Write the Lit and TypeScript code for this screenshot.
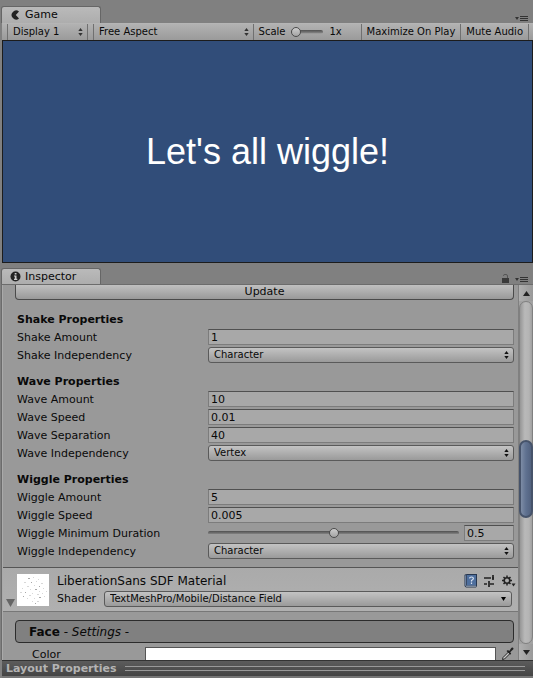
import { LitElement, html, css, svg } from "lit";
import { customElement } from "lit/decorators.js";

type Field = {
  id: string;
  label: string;
  kind: "text" | "select" | "slider";
  value: string;
};

type Section = { title: string; fields: Field[] };

const SECTIONS: Section[] = [
  {
    title: "Shake Properties",
    fields: [
      { id: "shake-amount", label: "Shake Amount", kind: "text", value: "1" },
      { id: "shake-ind", label: "Shake Independency", kind: "select", value: "Character" },
    ],
  },
  {
    title: "Wave Properties",
    fields: [
      { id: "wave-amount", label: "Wave Amount", kind: "text", value: "10" },
      { id: "wave-speed", label: "Wave Speed", kind: "text", value: "0.01" },
      { id: "wave-sep", label: "Wave Separation", kind: "text", value: "40" },
      { id: "wave-ind", label: "Wave Independency", kind: "select", value: "Vertex" },
    ],
  },
  {
    title: "Wiggle Properties",
    fields: [
      { id: "wiggle-amount", label: "Wiggle Amount", kind: "text", value: "5" },
      { id: "wiggle-speed", label: "Wiggle Speed", kind: "text", value: "0.005" },
      { id: "wiggle-min", label: "Wiggle Minimum Duration", kind: "slider", value: "0.5" },
      { id: "wiggle-ind", label: "Wiggle Independency", kind: "select", value: "Character" },
    ],
  },
];

// Faint glyph specks on the font atlas thumbnail.
const SPECKS = [
  [11, 4], [16, 3], [21, 5], [7, 8], [14, 8], [19, 7], [24, 9], [17, 11], [22, 12], [10, 12],
  [5, 14], [13, 15], [18, 15], [26, 14], [22, 17], [3, 18], [8, 18], [15, 19], [20, 20], [25, 19],
  [6, 22], [12, 21], [10, 24], [17, 24], [22, 23], [27, 22], [15, 27], [20, 27], [18, 29], [29, 17],
];

const updown = html`<svg class="updown" viewBox="0 0 5 8" aria-hidden="true">
  <path d="M2.5 0 4.7 3H.3zM2.5 8 4.7 5H.3z" />
</svg>`;

const paneMenu = html`<svg width="13" height="6" viewBox="0 0 13 6" aria-hidden="true">
  <path d="M0 1h4L2 4zM5 0h8v1H5zM5 2h8v1H5zM5 4h8v1H5z" fill="#333" />
</svg>`;

@customElement("app-root")
export class AppRoot extends LitElement {
  static styles = css`
    :host {
      display: flex;
      flex-direction: column;
      height: 100vh;
      overflow: hidden;
      background: #808080;
      color: #090909;
      font: 11px/16px "DejaVu Sans", Verdana, sans-serif;
    }
    * {
      box-sizing: border-box;
    }
    button,
    input,
    select {
      margin: 0;
      padding: 0;
      border: 0;
      border-radius: 0;
      background: none;
      color: inherit;
      font: inherit;
      outline: 0;
    }
    svg {
      display: block;
      flex: none;
    }

    .tabs {
      display: flex;
      align-items: flex-end;
      gap: 5px;
      height: 17px;
      padding: 0 5px 0 1px;
      flex: none;
    }
    .game-tabs {
      margin-top: 6px;
    }
    .inspector-tabs {
      height: 16px;
      margin-top: 5px;
    }
    .tab {
      display: flex;
      align-items: center;
      gap: 4px;
      width: 100px;
      height: 100%;
      padding: 0 8px;
      border: 1px solid #666;
      border-bottom: 0;
      border-radius: 3px 3px 0 0;
      background: linear-gradient(#bababa, #adadad);
      white-space: nowrap;
    }
    .tabs .tools {
      display: flex;
      align-items: flex-end;
      gap: 6px;
      margin-left: auto;
      padding-bottom: 1px;
    }
    .tools button {
      display: block;
    }

    .toolbar {
      display: flex;
      flex: none;
      height: 17px;
      margin: 0 0 0 2px;
      padding-left: 5px;
      border-top: 1px solid #b5b5b5;
      background: linear-gradient(#b2b2b2, #9a9a9a);
      font-size: 10px;
      white-space: nowrap;
    }
    .pick {
      position: relative;
      border-left: 1px solid #707070;
    }
    .pick select {
      appearance: none;
      display: block;
      width: 100%;
      height: 16px;
      padding-left: 5px;
    }
    .display {
      width: 81px;
      border-right: 1px solid #707070;
    }
    .aspect {
      flex: 1;
      margin-left: 5px;
    }
    .updown {
      position: absolute;
      right: 4px;
      top: 4px;
      width: 5px;
      height: 8px;
      fill: #333;
      pointer-events: none;
    }
    .scale {
      display: flex;
      align-items: center;
      width: 108px;
      padding-left: 5px;
      border-left: 1px solid #707070;
    }
    .scale input {
      width: 32px;
      margin: 0 6px;
    }
    .toggle {
      padding: 0 5px;
      border-left: 1px solid #707070;
    }
    .toggle:last-child {
      border-right: 1px solid #707070;
      margin-right: 4px;
    }

    input[type="range"] {
      appearance: none;
      height: 16px;
    }
    input[type="range"]::-webkit-slider-runnable-track {
      height: 4px;
      border-radius: 2px;
      background: linear-gradient(#505050, #777 60%, #aaa);
    }
    input[type="range"]::-webkit-slider-thumb {
      appearance: none;
      width: 10px;
      height: 10px;
      margin-top: -3px;
      border: 1px solid #4c4c4c;
      border-radius: 50%;
      background: linear-gradient(#ccc, #a4a4a4);
    }

    .view {
      flex: none;
      display: flex;
      align-items: center;
      justify-content: center;
      aspect-ratio: 531 / 223;
      margin-left: 2px;
      border: 1px solid #1c1c1c;
      background: #314d79;
      color: #fff;
      font: 36px/40px "Liberation Sans", Arial, sans-serif;
    }

    .inspector {
      flex: 1 1 0;
      min-height: 0;
      display: flex;
      margin-left: 1px;
      border-left: 1px solid #6c6c6c;
      border-top: 1px solid #6c6c6c;
      overflow: hidden;
      background: #999;
    }
    .content {
      flex: 1;
      min-width: 0;
      border-left: 1px solid #aaa;
    }
    .form {
      padding: 0 4px 6px 12px;
    }
    .update {
      display: block;
      width: 100%;
      height: 15px;
      margin-bottom: 3px;
      border: 1px solid #4a4a4a;
      border-top: 0;
      border-radius: 0 0 4px 4px;
      background: linear-gradient(#c0c0c0, #999);
      line-height: 14px;
    }
    fieldset {
      margin: 0;
      padding: 8px 0 0 2px;
      border: 0;
      min-width: 0;
    }
    legend {
      padding: 0;
      float: left;
      width: 100%;
      height: 18px;
      font-weight: bold;
      line-height: 18px;
    }
    .row {
      clear: both;
      display: grid;
      grid-template-columns: 191px 1fr;
      align-items: start;
      height: 18px;
    }
    .row label {
      line-height: 18px;
    }
    .text {
      display: block;
      width: 100%;
      height: 16px;
      padding: 0 2px;
      border: 1px solid #7c7c7c;
      border-top-color: #505050;
      background: #a8a8a8;
      line-height: 14px;
    }
    .popup {
      position: relative;
      height: 16px;
      border: 1px solid #5a5a5a;
      border-radius: 3px;
      background: linear-gradient(#c3c3c3, #9a9a9a);
      font-size: 10px;
    }
    .popup select {
      appearance: none;
      display: block;
      width: 100%;
      height: 14px;
      padding-left: 5px;
      line-height: 14px;
    }
    .popup .updown {
      top: 3px;
      fill: #111;
    }
    .slide {
      display: flex;
      align-items: center;
      gap: 5px;
    }
    .slide input[type="range"] {
      flex: 1;
      min-width: 0;
    }
    .slide .text {
      width: 50px;
    }

    .material {
      display: flex;
      align-items: center;
      gap: 2px;
      height: 45px;
      padding: 0 6px 0 3px;
      border-top: 1px solid #555;
      border-bottom: 1px solid #777;
      background: linear-gradient(#aaa, #b0b0b0);
    }
    .fold {
      align-self: flex-end;
      margin-bottom: 4px;
    }
    .info {
      flex: 1;
      min-width: 0;
      margin-left: 6px;
    }
    .title {
      display: flex;
      align-items: center;
      justify-content: space-between;
      height: 19px;
      margin-right: -4px;
      font-size: 12px;
    }
    .icons {
      display: flex;
      align-items: center;
      gap: 5px;
    }
    .shader {
      display: flex;
      align-items: center;
      gap: 8px;
      height: 18px;
    }
    .shader .popup {
      flex: 1;
    }
    .down {
      position: absolute;
      right: 5px;
      top: 5px;
      pointer-events: none;
    }

    .face {
      display: block;
      width: calc(100% - 16px);
      height: 23px;
      margin: 8px 4px 4px 12px;
      padding: 0 13px;
      border: 1px solid #2c2c2c;
      border-radius: 4px;
      background: #808080;
      font-size: 12px;
      text-align: left;
    }
    .color {
      display: grid;
      grid-template-columns: 113px 1fr 18px;
      align-items: start;
      height: 16px;
      padding: 0 4px 0 29px;
    }
    .color label {
      line-height: 16px;
    }
    .swatch {
      width: 100%;
      height: 16px;
      border: 1px solid #555;
      background: #fff;
    }
    .pipette {
      justify-self: end;
    }

    .scroll {
      display: flex;
      flex-direction: column;
      width: 15px;
      border-left: 1px solid #808080;
      background: #a2a2a2;
      flex: none;
    }
    .scroll button {
      display: flex;
      align-items: center;
      justify-content: center;
      height: 16px;
      flex: none;
      background: linear-gradient(90deg, #b0b0b0, #999);
    }
    .track {
      flex: 1;
      min-height: 0;
      display: flex;
      flex-direction: column;
      border: 1px solid #808080;
      border-radius: 7px;
      background: linear-gradient(90deg, #969696, #b9b9b9 40%, #b4b4b4 75%, #a0a0a0);
    }
    .before {
      flex: 138;
    }
    .thumb {
      flex: 74;
      border: 2px solid #46536a;
      border-radius: 7px;
      margin: 0 -1px;
      background: linear-gradient(90deg, #7d8ca5, #5f7190 50%, #52627f);
    }
    .after {
      flex: 125;
    }

    .layout {
      display: flex;
      align-items: center;
      gap: 8px;
      flex: none;
      height: 18px;
      padding: 0 8px 0 4px;
      border-top: 1px solid #333;
      border-bottom: 2px solid #777;
      margin-left: 2px;
      background: linear-gradient(#5c5c5c, #444);
      color: #b4b4b4;
      font-weight: bold;
    }
    .layout button {
      line-height: 15px;
    }
    .grip {
      flex: 1;
      height: 5px;
      border-top: 1px solid #999;
      border-bottom: 1px solid #999;
    }
  `;

  private control(f: Field) {
    if (f.kind === "select") {
      return html`<div class="popup">
        <select id=${f.id}>
          <option>${f.value}</option>
        </select>
        ${updown}
      </div>`;
    }
    if (f.kind === "slider") {
      return html`<div class="slide">
        <input type="range" id=${f.id} min="0" max="1" step="0.01" .value=${f.value} />
        <input class="text" type="text" aria-label=${f.label} .value=${f.value} />
      </div>`;
    }
    return html`<input class="text" type="text" id=${f.id} .value=${f.value} />`;
  }

  private section(s: Section) {
    return html`<fieldset>
      <legend>${s.title}</legend>
      ${s.fields.map(
        (f) => html`<div class="row"><label for=${f.id}>${f.label}</label>${this.control(f)}</div>`
      )}
    </fieldset>`;
  }

  render() {
    return html`
      <div class="tabs game-tabs">
        <div class="tab">
          <svg width="11" height="10" viewBox="0 0 11 10" aria-hidden="true">
            <path d="M9 1.5A4.5 4.5 0 1 0 9 8.5L5.8 5z" fill="#222" />
          </svg>
          Game
        </div>
        <div class="tools"><button aria-label="Game pane menu">${paneMenu}</button></div>
      </div>
      <div class="toolbar">
        <div class="pick display">
          <select aria-label="Display"><option>Display 1</option></select>${updown}
        </div>
        <div class="pick aspect">
          <select aria-label="Aspect"><option>Free Aspect</option></select>${updown}
        </div>
        <div class="scale">
          <label for="scale">Scale</label>
          <input type="range" id="scale" min="1" max="5" .value=${"1"} />
          <span>1x</span>
        </div>
        <button class="toggle">Maximize On Play</button>
        <button class="toggle">Mute Audio</button>
      </div>
      <div class="view">Let's all wiggle!</div>

      <div class="tabs inspector-tabs">
        <div class="tab">
          <svg width="11" height="11" viewBox="0 0 11 11" aria-hidden="true">
            <circle cx="5.5" cy="5.5" r="5" fill="#222" />
            <path d="M4.7 2h1.8v1.6H4.7zM4 4.5h2.5v3.3h.8V9H4V7.8h.8V5.6H4z" fill="#ccc" />
          </svg>
          Inspector
        </div>
        <div class="tools">
          <button aria-label="Lock">
            <svg width="7" height="9" viewBox="0 0 7 9">
              <path d="M1.5 2V1.5Q1.5.5 3 .5h1Q5.5.5 5.5 2v2" fill="none" stroke="#555" />
              <path d="M0 4h7v5H0z" fill="#3a3a3a" />
            </svg>
          </button>
          <button aria-label="Inspector pane menu">${paneMenu}</button>
        </div>
      </div>
      <div class="inspector">
        <div class="content">
          <div class="form">
            <button class="update">Update</button>
            <div>${SECTIONS.map((s) => this.section(s))}</div>
          </div>
          <div class="material">
            <svg class="fold" width="9" height="8" viewBox="0 0 9 8">
              <path d="M0 0h9L4.5 8z" fill="#666" />
            </svg>
            <svg width="32" height="32" viewBox="0 0 32 32" aria-label="Font atlas">
              <path d="M0 0h32v32H0z" fill="#fff" />
              ${SPECKS.map(
                ([x, y], i) =>
                  svg`<rect x=${x} y=${y} width=${i % 3 ? 1 : 2} height="1" fill=${
                    i % 4 ? "#d8d8d8" : "#a8a8a8"
                  } />`
              )}
            </svg>
            <div class="info">
              <div class="title">
                LiberationSans SDF Material
                <div class="icons">
                  <button aria-label="Help">
                    <svg width="14" height="14" viewBox="0 0 14 14">
                      <path d="M1 .5 3 0h10v12l-1 1.5H2L.5 12V1z" fill="#26364f" />
                      <path d="M3 1h9v10.5H3z" fill="#4e6f9e" />
                      <path d="M1.3 1.5 2.2 1v10.5l-.9.5z" fill="#8aa0c0" />
                      <path d="M2 12.2h10" stroke="#c4cedb" stroke-width=".8" />
                      <path
                        d="M5.5 4.3Q5.7 3 7.5 3t1.9 1.5Q9.4 5.5 7.5 6.6V7.6M7.5 8.6v1.3"
                        fill="none"
                        stroke="#dbe5f3"
                        stroke-width="1.2"
                      />
                    </svg>
                  </button>
                  <button aria-label="Presets">
                    <svg width="14" height="12" viewBox="0 0 14 12">
                      <path
                        d="M1 3h7M9 3h2M10 0v5M1 9h3M6 6v6M7 9h4"
                        fill="none"
                        stroke="#222"
                        stroke-width="1.7"
                      />
                    </svg>
                  </button>
                  <button aria-label="Material options">
                    <svg width="14" height="12" viewBox="0 0 14 12">
                      <circle cx="5" cy="5.5" r="2.8" fill="none" stroke="#222" stroke-width="1.6" />
                      <path
                        d="M5 .5v2M5 8.5v2M0 5.5h2M8 5.5h2M1.5 2l1.3 1.3M7.2 7.7 8.5 9M1.5 9l1.3-1.3M7.2 3.3 8.5 2"
                        stroke="#222"
                        stroke-width="1.5"
                      />
                      <path d="M9.5 8.5h4l-2 3z" fill="#222" />
                    </svg>
                  </button>
                </div>
              </div>
              <div class="shader">
                <label for="shader">Shader</label>
                <div class="popup">
                  <select id="shader"><option>TextMeshPro/Mobile/Distance Field</option></select>
                  <svg class="down" width="5" height="4" viewBox="0 0 5 4"><path d="M0 0h5L2.5 4z" /></svg>
                </div>
              </div>
            </div>
          </div>
          <button class="face"><b>Face</b> - <i>Settings</i> -</button>
          <div class="color">
            <label for="color">Color</label>
            <button class="swatch" id="color" aria-label="Color"></button>
            <button class="pipette" aria-label="Pick color">
              <svg width="13" height="14" viewBox="0 0 13 14">
                <path d="M1.5 12.5 2 10.5 7.5 5 9 6.5 3.5 12z" fill="#ccc" stroke="#222" />
                <path
                  d="M5.5 4 7 3l1.2 1L10.5.8Q12 0 12.5 1.5q0 .8-.7 1.2L9.2 5.2l1 1.3-1 1.2z"
                  fill="#222"
                />
              </svg>
            </button>
          </div>
        </div>
        <div class="scroll">
          <button aria-label="Scroll up">
            <svg width="7" height="5" viewBox="0 0 7 5"><path d="M0 5h7L3.5 0z" fill="#222" /></svg>
          </button>
          <div class="track">
            <div class="before"></div>
            <div class="thumb"></div>
            <div class="after"></div>
          </div>
          <button aria-label="Scroll down">
            <svg width="7" height="5" viewBox="0 0 7 5"><path d="M0 0h7L3.5 5z" fill="#222" /></svg>
          </button>
        </div>
      </div>
      <div class="layout">
        <button>Layout Properties</button>
        <div class="grip"></div>
      </div>
    `;
  }
}
